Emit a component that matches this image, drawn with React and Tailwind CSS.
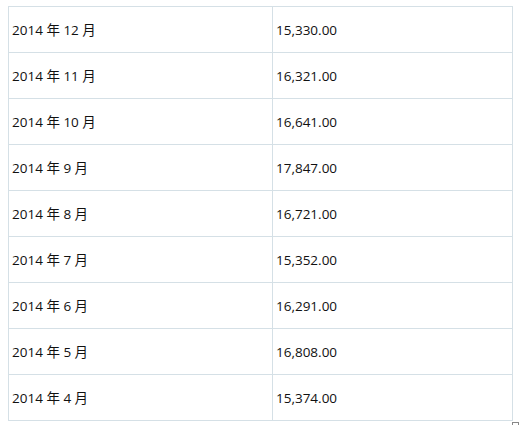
import React from 'react';

const rows = [
  ['2014 年 12 月', '15,330.00'],
  ['2014 年 11 月', '16,321.00'],
  ['2014 年 10 月', '16,641.00'],
  ['2014 年 9 月', '17,847.00'],
  ['2014 年 8 月', '16,721.00'],
  ['2014 年 7 月', '15,352.00'],
  ['2014 年 6 月', '16,291.00'],
  ['2014 年 5 月', '16,808.00'],
  ['2014 年 4 月', '15,374.00'],
];

export default function App() {
  return (
    <div
      className="w-[519px] h-[425px] bg-white pl-2 pt-1.5 overflow-hidden relative"
      style={{ fontFamily: '"Open Sans", "Noto Sans CJK SC", sans-serif' }}
    >
      <table className="border-collapse w-[505px] text-[13.5px] text-[#111]">
        <tbody>
          {rows.map(([month, value]) => (
            <tr key={month} className="h-[46px]">
              <td className="border border-[#d5e0e6] pl-[3px] pt-[2px] w-[264px]">{month}</td>
              <td className="border border-[#d5e0e6] pl-[3px] pt-[2px]">{value}</td>
            </tr>
          ))}
        </tbody>
      </table>
      <div className="absolute right-0 bottom-[-4px] w-[7px] h-[7px] border border-[#888]" />
    </div>
  );
}
